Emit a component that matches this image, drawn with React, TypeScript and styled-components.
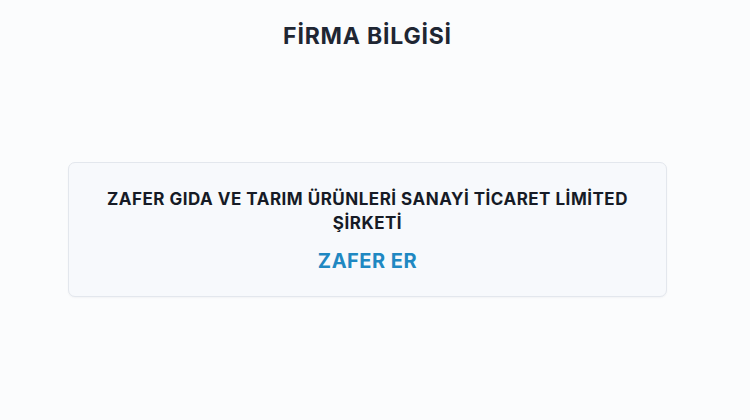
import React from "react"
import styled, { createGlobalStyle } from "styled-components"

const GlobalStyle = createGlobalStyle`
  html, body {
    margin: 0;
    padding: 0;
    background: #fbfcfd;
  }
  body {
    font-family: Inter, "Noto Sans", sans-serif;
  }
`

const Page = styled.main`
  box-sizing: border-box;
  width: 735px;
  min-height: 420px;
  display: flex;
  flex-direction: column;
  align-items: center;
  padding-top: 22px;
`

const Title = styled.h1`
  margin: 0;
  font-size: 23px;
  font-weight: 700;
  letter-spacing: 0.8px;
  color: #1f2633;
`

const Card = styled.section`
  box-sizing: border-box;
  margin-top: 112px;
  width: 599px;
  height: 135px;
  display: flex;
  flex-direction: column;
  align-items: center;
  justify-content: center;
  padding: 0 30px;
  background: #f7f9fc;
  border: 1px solid #e3e7ed;
  border-radius: 7px;
  box-shadow: 0 1px 2px rgba(15, 23, 42, 0.04);
`

const CompanyName = styled.h2`
  margin: 0;
  font-size: 17px;
  line-height: 24px;
  font-weight: 700;
  letter-spacing: 0.5px;
  text-align: center;
  color: #161b26;
`

const Owner = styled.p`
  margin: 14px 0 0;
  font-size: 20px;
  line-height: 24px;
  font-weight: 700;
  letter-spacing: 0.5px;
  color: #1f88c2;
`

export default function App() {
  return (
    <>
      <GlobalStyle />
      <Page>
        <Title>FİRMA BİLGİSİ</Title>
        <Card>
          <CompanyName>
            ZAFER GIDA VE TARIM ÜRÜNLERİ SANAYİ TİCARET LİMİTED
            <br />
            ŞİRKETİ
          </CompanyName>
          <Owner>ZAFER ER</Owner>
        </Card>
      </Page>
    </>
  )
}
